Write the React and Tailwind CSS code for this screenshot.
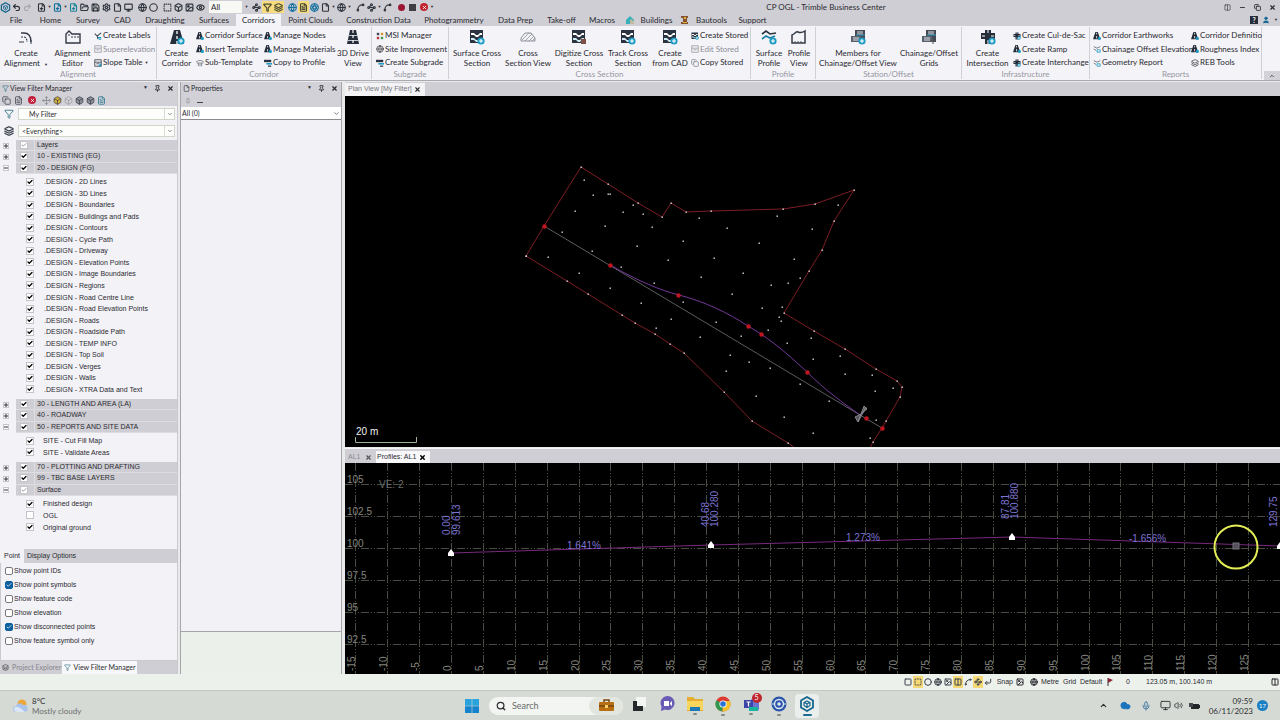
import {
  Aperture,
  Box,
  BoxSelect,
  Check,
  ChevronDown,
  ChevronUp,
  Circle,
  CircleHelp,
  Cloud,
  Columns2,
  Copy,
  CornerDownLeft,
  Eye,
  File,
  FilePlus,
  FileText,
  Filter,
  FolderOpen,
  Globe,
  Image,
  Layers,
  Mic,
  Minus,
  Monitor,
  Move,
  Pin,
  Redo2,
  Save,
  Search,
  Settings,
  Spline,
  Square,
  Undo2,
  User,
  Volume2,
  Waypoints,
  X,
} from "lucide-react";

/* ---------- ribbon icons ---------- */

function Plus({ x = 11, y = 11 }) {
  return (
    <g transform={`translate(${x} ${y})`}>
      <circle r="3.6" fill="#1c9cc4" />
      <path d="M-2 0H2M0 -2V2" stroke="#fff" strokeWidth="1.1" />
    </g>
  );
}

function RoadIcon({ plus = true, size = 16 }) {
  return (
    <svg width={size} height={size} viewBox="0 0 16 16">
      <path d="M5 1h6l4 14H1z" fill="#252c3a" />
      <path d="M8 2v3M8 7v3M8 12v3" stroke="#fff" strokeWidth="1.3" />
      {plus && <Plus x={12} y={12} />}
    </svg>
  );
}

function DriveIcon() {
  return (
    <svg width="16" height="16" viewBox="0 0 16 16">
      <path d="M5 1h6l3 14H2z" fill="#252c3a" />
      <path d="M4 6.500h8M3 11.500h10" stroke="#c3c7ce" fill="none" />
      <path d="M8 1v14" stroke="#fff" strokeWidth="1.2" strokeDasharray="3 2" />
    </svg>
  );
}

function CurveIcon() {
  return (
    <svg width="16" height="16" viewBox="0 0 16 16" fill="none" stroke="#333a46">
      <path d="M3 4h3c5 0 7 4 7 9" strokeWidth="1.3" />
      <path d="M3 8h3c2 0 3 2 3 5" strokeWidth="1.2" strokeDasharray="2 1" />
      <path d="M1 13h5M13 11v4" strokeWidth="1" />
    </svg>
  );
}

function EditorIcon() {
  return (
    <svg width="16" height="16" viewBox="0 0 16 16" fill="none" stroke="#333a46">
      <path d="M1 14V5l3-3 3 3h8v9z" strokeWidth="1.4" />
      <path d="M4 5v2M7 7v2M10 7v2M13 7v2" strokeWidth="1" />
    </svg>
  );
}

function SectionIcon({ badge = "plus", size = 16 }) {
  return (
    <svg width={size} height={size} viewBox="0 0 16 16">
      <rect x="1" y="1" width="13" height="13" fill="#2b3240" />
      <path d="M2 4h3l2 2h2l2-2h2v2h-2L9 8H7L5 6H2z" fill="#fff" />
      <path d="M2 9h3l2 2h2l2-2h2v2h-2l-2 2H7l-2-2H2z" fill="#cfeaf3" />
      {badge === "plus" && <Plus x={12} y={12} />}
      {badge === "pen" && <path d="M10 10h5v5h-5z" fill="#7d5147" />}
    </svg>
  );
}

function HatchIcon() {
  return (
    <svg width="16" height="16" viewBox="0 0 16 16" fill="none" stroke="#8b8e98">
      <path d="M1 12V9l4-5h6l4 5v3z" />
      <path d="M2 11l7-7M5 12l7-7M9 12l5-5M12 12l3-3" strokeWidth="0.8" />
    </svg>
  );
}

function SurfaceProfileIcon() {
  return (
    <svg width="16" height="16" viewBox="0 0 16 16" fill="none">
      <path d="M1 5l4-3 4 3 6-1" stroke="#2b3240" strokeWidth="1.6" />
      <path d="M1 10l4-3 4 2 5-2" stroke="#1d7fa4" strokeWidth="1.6" />
      <Plus x={12} y={12} />
    </svg>
  );
}

function ProfileIcon() {
  return (
    <svg width="16" height="16" viewBox="0 0 16 16" fill="none" stroke="#333a46">
      <path d="M1 14V6c3-1 4-4 6-3s4 1 7-1v12z" strokeWidth="1.5" />
      <path d="M4 12v2M7 12v2M10 12v2" strokeWidth="0.8" />
    </svg>
  );
}

function OffsetIcon({ plus = true }) {
  return (
    <svg width="16" height="16" viewBox="0 0 16 16">
      <path d="M5 1h10v12H5z" fill="#424955" />
      <path d="M1 7h10v6H1z" fill="#59616d" />
      <path d="M7 3h6M7 5h6M3 9h6M3 11h6" stroke="#dfe3e8" />
      <path d="M6 6h9" stroke="#2a95b8" />
      {plus ? <Plus x={12} y={12} /> : <path d="M9 12h6M12 9v6" stroke="#555" />}
    </svg>
  );
}

function IntersectionIcon({ size = 16 }) {
  return (
    <svg width={size} height={size} viewBox="0 0 16 16">
      <path d="M5 1h6v3h4v6h-4v5H5v-5H1V4h4z" fill="#252c3a" />
      <path d="M8 1v3M8 11v4M2 7h3M11 7h3" stroke="#fff" />
      <Plus x={12} y={12} />
    </svg>
  );
}

function LabelIcon() {
  return (
    <svg viewBox="0 0 10 10" fill="none">
      <path d="M1 2l3 3 5-4M4 5l1 4" stroke="#3f4753" strokeWidth="1.3" />
      <path d="M5 7h4M6 9h3" stroke="#1c9cc4" strokeWidth="1.4" />
    </svg>
  );
}

function TableIcon({ gray }) {
  return (
    <svg viewBox="0 0 10 10" fill="none">
      <rect x="1" y="1" width="8" height="8" stroke={gray ? "#9a9aa2" : "#333a46"} />
      <path d="M1 4h8M3 6h4" stroke={gray ? "#9a9aa2" : "#333a46"} />
      {!gray && <path d="M5 9l4-4v4z" fill="#1c9cc4" />}
    </svg>
  );
}

function SmallRoad() {
  return (
    <svg viewBox="0 0 10 10">
      <path d="M3 0h3l3 9H0z" fill="#252c3a" />
      <path d="M4.500 1v2M4.500 5v3" stroke="#fff" />
      <circle cx="8" cy="8" r="2" fill="#1c9cc4" />
    </svg>
  );
}

function TemplateIcon() {
  return (
    <svg viewBox="0 0 10 10" fill="none" stroke="#70757f">
      <path d="M0 4l3-2h4l3 2M1 5h8M3 5v4M7 5v4M5 6v3" />
    </svg>
  );
}

function MsiIcon() {
  return (
    <svg viewBox="0 0 10 10">
      <path d="M1 1h3v3H1z" fill="#3f4753" />
      <path d="M6 1h3v3H6z" fill="#d8962c" />
      <path d="M1 6h3v3H1z" fill="#b23737" />
      <path d="M6 6h3v3H6z" fill="#3e9a52" />
    </svg>
  );
}

function SubgradeIcon() {
  return (
    <svg viewBox="0 0 10 10">
      <path d="M0 1h9v3H0z" fill="#2b3240" />
      <path d="M3 5h7v2H3z" fill="#1c9cc4" />
      <path d="M5 8h4v2H5z" fill="#59616d" />
    </svg>
  );
}

function ReportIcon() {
  return (
    <svg viewBox="0 0 10 10" fill="none">
      <path d="M1 2l4 2 4-2M1 5l3 2" stroke="#59616d" />
      <path d="M5 6h4v3H5z" stroke="#1c9cc4" />
    </svg>
  );
}

/* ---------- ribbon ---------- */

function BigButton({ icon, lines, className, caret }) {
  return (
    <button className={`flex shrink-0 flex-col items-center ${className}`}>
      <span className="mb-[3px]">{icon}</span>
      <span className="text-[8px] leading-[10px] whitespace-nowrap">
        {lines[0]}
        <br />
        {lines[1]}
        {caret && <span className="ml-1 text-[4px]">▼</span>}
      </span>
    </button>
  );
}

function SmallColumn({ items, className }) {
  return (
    <div className={`flex h-[40px] shrink-0 flex-col justify-between ${className}`}>
      {items.map(([icon, label, gray]) => (
        <button
          key={label}
          className={`flex items-center gap-px text-[8px] leading-[13px] whitespace-nowrap [&>svg]:size-[8px] [&>svg]:shrink-0 ${gray ? "text-[#8f8f97]" : ""}`}
        >
          {icon}
          {label}
          {label === "Slope Table" && <span className="ml-px text-[4px]">▼</span>}
        </button>
      ))}
    </div>
  );
}

function RibbonGroup({ title, className, children }) {
  return (
    <section
      className={`flex shrink-0 flex-col border-r border-[#cfcfd6] pt-[2px] ${className}`}
    >
      <div className="flex h-[42px]">{children}</div>
      <h2 className="text-center text-[8px] leading-[9px] text-[#97979f]">{title}</h2>
    </section>
  );
}

function Ribbon() {
  return (
    <div className="flex h-[55px] border-b border-[#a9a9af] bg-[#f3f3f8]">
      <div className="flex min-w-0 flex-1 overflow-hidden py-px">
        <RibbonGroup title="Alignment" className="w-[157px]">
          <BigButton icon={<CurveIcon />} lines={["Create", "Alignment"]} caret className="w-[52px]" />
          <BigButton icon={<EditorIcon />} lines={["Alignment", "Editor"]} className="w-[41px]" />
          <SmallColumn
            className="ml-px"
            items={[
              [<LabelIcon />, "Create Labels"],
              [<TableIcon gray />, "Superelevation", true],
              [<TableIcon />, "Slope Table"],
            ]}
          />
        </RibbonGroup>
        <RibbonGroup title="Corridor" className="w-[215px]">
          <BigButton icon={<RoadIcon />} lines={["Create", "Corridor"]} className="w-[39px]" />
          <SmallColumn
            className="w-[68px]"
            items={[
              [<SmallRoad />, "Corridor Surface"],
              [<SmallRoad />, "Insert Template"],
              [<TemplateIcon />, "Sub-Template"],
            ]}
          />
          <SmallColumn
            className="w-[71px]"
            items={[
              [<SmallRoad />, "Manage Nodes"],
              [<SmallRoad />, "Manage Materials"],
              [<SubgradeIcon />, "Copy to Profile"],
            ]}
          />
          <BigButton icon={<DriveIcon />} lines={["3D Drive", "View"]} className="w-[36px]" />
        </RibbonGroup>
        <RibbonGroup title="Subgrade" className="w-[77px]">
          <SmallColumn
            className="ml-[4px]"
            items={[
              [<MsiIcon />, "MSI Manager"],
              [<Globe size={9} />, "Site Improvement"],
              [<SubgradeIcon />, "Create Subgrade"],
            ]}
          />
        </RibbonGroup>
        <RibbonGroup title="Cross Section" className="w-[302px]">
          <BigButton icon={<SectionIcon />} lines={["Surface Cross", "Section"]} className="w-[56px]" />
          <BigButton icon={<HatchIcon />} lines={["Cross", "Section View"]} className="w-[46px]" />
          <BigButton icon={<SectionIcon badge="pen" />} lines={["Digitize Cross", "Section"]} className="w-[56px]" />
          <BigButton icon={<SectionIcon />} lines={["Track Cross", "Section"]} className="w-[42px]" />
          <BigButton icon={<SectionIcon />} lines={["Create", "from CAD"]} className="w-[42px]" />
          <SmallColumn
            items={[
              [<SectionIcon size={9} />, "Create Stored"],
              [<TableIcon gray />, "Edit Stored", true],
              [<Copy size={9} color="#70757f" />, "Copy Stored"],
            ]}
          />
        </RibbonGroup>
        <RibbonGroup title="Profile" className="w-[65px]">
          <BigButton icon={<SurfaceProfileIcon />} lines={["Surface", "Profile"]} className="ml-[3px] w-[30px]" />
          <BigButton icon={<ProfileIcon />} lines={["Profile", "View"]} className="w-[30px]" />
        </RibbonGroup>
        <RibbonGroup title="Station/Offset" className="w-[146px]">
          <BigButton icon={<OffsetIcon />} lines={["Members for", "Chainage/Offset View"]} className="w-[84px]" />
          <BigButton icon={<OffsetIcon plus={false} />} lines={["Chainage/Offset", "Grids"]} className="w-[58px]" />
        </RibbonGroup>
        <RibbonGroup title="Infrastructure" className="w-[128px]">
          <BigButton icon={<IntersectionIcon />} lines={["Create", "Intersection"]} className="w-[51px]" />
          <SmallColumn
            items={[
              [<IntersectionIcon size={9} />, "Create Cul-de-Sac"],
              [<SmallRoad />, "Create Ramp"],
              [<IntersectionIcon size={9} />, "Create Interchange"],
            ]}
          />
        </RibbonGroup>
        <RibbonGroup title="Reports" className="w-[172px]">
          <SmallColumn
            className="ml-[3px] w-[98px]"
            items={[
              [<SmallRoad />, "Corridor Earthworks"],
              [<ReportIcon />, "Chainage Offset Elevation"],
              [<ReportIcon />, "Geometry Report"],
            ]}
          />
          <SmallColumn
            items={[
              [<SmallRoad />, "Corridor Definitio"],
              [<SmallRoad />, "Roughness Index"],
              [<Layers size={9} />, "REB Tools"],
            ]}
          />
        </RibbonGroup>
      </div>
      <div className="flex w-[16px] flex-col justify-end">
        <button aria-label="Collapse ribbon" className="flex h-[9px] items-center justify-center bg-[#d2d1d7]">
          <ChevronUp size={6} strokeWidth={3} />
        </button>
      </div>
    </div>
  );
}

const menuTabs = [
  ["File", "w-[32px]"],
  ["Home", "w-[37px]"],
  ["Survey", "w-[38px]"],
  ["CAD", "w-[31px]"],
  ["Draughting", "w-[54px]"],
  ["Surfaces", "w-[44px]"],
  ["Corridors", "w-[45px]"],
  ["Point Clouds", "w-[59px]"],
  ["Construction Data", "w-[77px]"],
  ["Photogrammetry", "w-[74px]"],
  ["Data Prep", "w-[49px]"],
  ["Take-off", "w-[43px]"],
  ["Macros", "w-[38px]"],
  ["Buildings", "w-[56px]"],
  ["Bautools", "w-[54px]"],
  ["Support", "w-[43px]"],
];

function MenuTabs() {
  return (
    <nav className="flex h-[12px] items-stretch text-[8px] leading-[12px]">
      {menuTabs.map(([label, width]) => (
        <button
          key={label}
          className={`flex shrink-0 items-center justify-center whitespace-nowrap ${width} ${label === "Corridors" ? "bg-[#f3f3f8]" : ""}`}
        >
          {label === "Buildings" && (
            <svg width="8" height="8" viewBox="0 0 8 8" className="mr-[7px]">
              <path d="M0 4l4-4 4 4v4H0z" fill="#35b0b8" />
              <path d="M4 3l4 2v3H4z" fill="#c2b8a4" />
            </svg>
          )}
          {label === "Bautools" && (
            <svg width="8" height="8" viewBox="0 0 8 8" className="mr-[7px]">
              <path d="M0 0h7v2H6v4h1v2H0V6h2V2H0z" fill="#85522f" />
              <path d="M3 1h2v2H3zM2 6h4v1H2z" fill="#e2b23c" />
            </svg>
          )}
          {label}
        </button>
      ))}
      <div className="ml-auto flex items-center gap-1 pr-[2px]">
        <span className="flex size-[8px] items-center justify-center bg-[#252c3a] text-[7px] font-bold text-white">
          ?
        </span>
        <User size={8} fill="#1a6896" color="#1a6896" />
        <span className="text-[4px]">▼</span>
      </div>
    </nav>
  );
}

/* ---------- title bar ---------- */

function TrimbleLogo({ size = 11 }) {
  return (
    <svg width={size} height={size} viewBox="0 0 16 16" fill="none" stroke="#17678f">
      <path d="M8 1l6 3.500v7L8 15l-6-3.500v-7z" strokeWidth="1.8" />
      <path d="M8 5l3 1.500v3L8 11.500l-3-2v-3zM8 8v3M8 8l3-2M8 8L5 6" strokeWidth="1.2" />
    </svg>
  );
}

const quickTools = [
  [TrimbleLogo], [Undo2], [Redo2, "faded"], "gap", [FilePlus], "caret",
  [FilePlus, "blue"], "caret", [FilePlus, "teal"], [FolderOpen], [Save],
  [Settings], [File], [Monitor], "gap", [Globe], [Circle], "gap",
  [BoxSelect], [Box], [Image], [Eye], "gap",
];

const viewTools = [
  [Waypoints], [Filter, "active"], [Layers, "active"], "gap", [Globe, "blue"],
  [FileText, "active"], [Aperture, "blue"], [File], "caret", [Globe], "caret",
  "gap", [Spline], [Waypoints], "caret", [Spline], "gap",
];

const toolTones = {
  faded: "text-[#a8a8ae]",
  blue: "text-[#126f9e]",
  teal: "text-[#20859a]",
  active: "bg-[#f6dc7d] text-[#4b4a35]",
};

function ToolStrip({ tools }) {
  return tools.map((tool, i) => {
    if (tool === "gap") return <span key={i} className="w-[3px] shrink-0" />;
    if (tool === "caret")
      return (
        <span key={i} className="w-[5px] shrink-0 text-center text-[4px]">
          ▼
        </span>
      );
    const [Icon, tone] = tool;
    return (
      <button
        key={i}
        className={`flex h-[12px] w-[11px] shrink-0 items-center justify-center ${toolTones[tone] ?? "text-[#30343e]"}`}
      >
        <Icon size={Icon === TrimbleLogo ? 11 : 9} strokeWidth={3} />
      </button>
    );
  });
}

function TitleBar() {
  return (
    <header className="flex h-[14px] items-center">
      <ToolStrip tools={quickTools} />
      <input
        aria-label="Selection"
        defaultValue="All"
        className="h-[12px] w-[33px] shrink-0 bg-[#f8f8f4] px-[2px] text-[8px] outline-none"
      />
      <span className="w-[9px] shrink-0 text-center text-[4px]">▼</span>
      <ToolStrip tools={viewTools} />
      <span className="mx-[2px] size-[7px] rounded-full bg-[#9c1733]" />
      <span className="mx-[2px] size-[7px] bg-[#3d3f45]" />
      <span className="mx-[2px] flex size-[8px] items-center justify-center rounded-full bg-[#c3252f] text-white">
        <X size={5} strokeWidth={4} />
      </span>
      <span className="text-[4px]">▼</span>
      <h1 className="flex-1 text-center text-[8px] leading-[12px]">
        CP OGL - Trimble Business Center
      </h1>
      <div className="flex w-[62px] items-center justify-end gap-[8px] pr-1">
        <button aria-label="Ribbon display options"><Columns2 size={7} /></button>
        <button aria-label="Minimize"><Minus size={7} strokeWidth={3} /></button>
        <button aria-label="Restore"><Copy size={7} strokeWidth={3} /></button>
        <button aria-label="Close"><X size={7} strokeWidth={4} /></button>
      </div>
    </header>
  );
}

/* ---------- side panels ---------- */

function PanelTitle({ icon, title }) {
  return (
    <div className="flex h-[12px] items-center gap-px bg-[#d2d1d7] px-[2px] text-[7px]">
      {icon}
      <h2 className="flex-1 whitespace-nowrap">{title}</h2>
      <div className="flex items-center gap-[6px] pr-px">
        <span className="text-[5px]">▼</span>
        <Pin size={7} strokeWidth={3} />
        <X size={7} strokeWidth={4} />
      </div>
    </div>
  );
}

function TreeCheck({ label, checked = true, soft }) {
  return (
    <span className="grid size-[8px] shrink-0 place-items-center">
      <input
        type="checkbox"
        aria-label={label}
        defaultChecked={checked}
        className="peer col-start-1 row-start-1 size-[8px] appearance-none border border-[#c3c3c8] bg-white"
      />
      <Check
        size={6}
        strokeWidth={soft ? 3 : 5}
        className={`pointer-events-none invisible col-start-1 row-start-1 peer-checked:visible ${soft ? "text-[#77777c]" : "text-black"}`}
      />
    </span>
  );
}

const tree = [
  { name: "Layers", soft: true },
  { name: "10 - EXISTING (EG)" },
  {
    name: "20 - DESIGN (FG)",
    height: "h-[219px]",
    indent: "pl-[10px]",
    children: [
      ".DESIGN - 2D Lines",
      ".DESIGN - 3D Lines",
      ".DESIGN - Boundaries",
      ".DESIGN - Buildings and Pads",
      ".DESIGN - Contours",
      ".DESIGN - Cycle Path",
      ".DESIGN - Driveway",
      ".DESIGN - Elevation Points",
      ".DESIGN - Image Boundaries",
      ".DESIGN - Regions",
      ".DESIGN - Road Centre Line",
      ".DESIGN - Road Elevation Points",
      ".DESIGN - Roads",
      ".DESIGN - Roadside Path",
      ".DESIGN - TEMP INFO",
      ".DESIGN - Top Soil",
      ".DESIGN - Verges",
      ".DESIGN - Walls",
      ".DESIGN - XTRA Data and Text",
    ],
  },
  { name: "30 - LENGTH AND AREA (LA)" },
  { name: "40 - ROADWAY" },
  {
    name: "50 - REPORTS AND SITE DATA",
    height: "h-[23px]",
    indent: "pl-[9px]",
    children: ["SITE - Cut Fill Map", "SITE - Validate Areas"],
  },
  { name: "70 - PLOTTING AND DRAFTING" },
  { name: "99 - TBC BASE LAYERS" },
  {
    name: "Surface",
    soft: true,
    height: "h-[35px]",
    indent: "pl-[9px]",
    children: ["Finished design", "OGL", "Original ground"],
  },
];

// three group rows share one block so that they keep an even pitch
const treeBlocks = [tree.slice(0, 3), tree.slice(3, 6), tree.slice(6, 9)];

function LayerTree() {
  return treeBlocks.map((groups) => {
    const open = groups[2];
    return (
      <div key={open.name}>
        <div className="grid h-[34px] auto-rows-fr">
          {groups.map((group) => (
            <div key={group.name} className="flex items-center">
              <button
                aria-label={`Toggle ${group.name}`}
                className="mr-[7px] ml-[3px] flex size-[6px] items-center justify-center border border-[#c5c5ca] bg-white"
              >
                <svg width="4" height="4" viewBox="0 0 4 4" stroke="#333">
                  <path d={group.children ? "M0 2h4" : "M0 2h4M2 0v4"} />
                </svg>
              </button>
              <div className="flex h-full flex-1 items-center border-b border-[#dddde2] bg-[#cfced4] pl-[4px] text-[7px] leading-[10px]">
                <TreeCheck label={group.name} soft={group.soft} />
                <span className="ml-[6px] h-full border-l border-[#dddde2] pl-[2px]">
                  {group.name}
                </span>
              </div>
            </div>
          ))}
        </div>
        <ul className={`mt-[2px] mb-[4px] grid auto-rows-fr pl-[26px] text-[7px] leading-[11px] ${open.height}`}>
          {open.children.map((name) => (
            <li key={name} className="flex items-center">
              <TreeCheck label={name} checked={name !== "OGL"} />
              <span className={`whitespace-nowrap ${open.indent}`}>{name}</span>
            </li>
          ))}
        </ul>
      </div>
    );
  });
}

const displayOptions = [
  ["Show point IDs", false],
  ["Show point symbols", true],
  ["Show feature code", false],
  ["Show elevation", false],
  ["Show disconnected points", true],
  ["Show feature symbol only", false],
];

function FilterSelect({ label, value, className }) {
  return (
    <div className="grid flex-1 items-center border border-[#cfd8c8] bg-[#fdfdfb]">
      <select
        aria-label={label}
        className={`col-start-1 row-start-1 h-[10px] appearance-none text-[7px] leading-[10px] outline-none ${className}`}
      >
        <option>{value}</option>
      </select>
      <span className="pointer-events-none col-start-1 row-start-1 flex h-[10px] w-[10px] items-center justify-center justify-self-end border-l border-[#d5ddd0]">
        <ChevronDown size={6} />
      </span>
    </div>
  );
}

function FilterPanel() {
  return (
    <aside className="flex w-[178px] shrink-0 flex-col border-r border-[#c9c9ce] bg-[#f3f2f7]">
      <PanelTitle icon={<Filter size={7} color="#24687e" />} title="View Filter Manager" />
      <div className="flex h-[12px] items-center gap-[2px] bg-[#d2d1d7] pl-[2px] text-[#3b3f49]">
        <Copy size={9} />
        <FileText size={9} className="mx-px" />
        <span className="mx-[2px] flex size-[8px] items-center justify-center rounded-full bg-[#c0203c] text-white">
          <X size={5} strokeWidth={4} />
        </span>
        <Move size={9} className="ml-[2px] text-[#80848c]" />
        <Box size={9} fill="#d4b13b" />
        <Box size={9} color="#9b9ba1" />
        <Box size={9} fill="#8c9098" />
        <Box size={9} fill="#8c9098" />
        <FileText size={9} color="#1d718c" />
      </div>
      <div className="flex h-[16px] items-center gap-1 pr-[2px] pl-[4px]">
        <Filter size={10} color="#2e6c7c" />
        <FilterSelect label="View filter" value="My Filter" className="pl-[10px]" />
      </div>
      <div className="mb-px flex h-[17px] items-center gap-1 pt-px pr-[2px] pl-[4px]">
        <Layers size={10} strokeWidth={3} color="#3c4450" />
        <FilterSelect label="Selection set" value="<Everything>" className="pl-[3px]" />
      </div>
      <div className="flex-1 font-['Liberation_Sans',sans-serif]">
        <LayerTree />
      </div>
      <div className="flex h-[14px] bg-[#cfced4] text-[7px] font-['Liberation_Sans',sans-serif]">
        <button className="w-[24px] bg-[#f3f2f7]">Point</button>
        <button className="px-[3px]">Display Options</button>
      </div>
      <div className="grid h-[97px] content-start border-l border-[#c9c9ce] pt-[1px] pl-[4px] font-['Liberation_Sans',sans-serif]">
        {displayOptions.map(([label, checked]) => (
          <label key={label} className="flex h-[14px] items-center gap-px text-[7px]">
            <span className="grid size-[8px] place-items-center">
              <input
                type="checkbox"
                defaultChecked={checked}
                className="peer col-start-1 row-start-1 size-[8px] appearance-none rounded-[2px] border border-[#77777c] bg-white checked:border-[#0d5f9f] checked:bg-[#0d5f9f]"
              />
              <Check
                size={6}
                strokeWidth={3}
                className="pointer-events-none invisible col-start-1 row-start-1 text-white peer-checked:visible"
              />
            </span>
            {label}
          </label>
        ))}
      </div>
      <div className="flex h-[14px] border-t border-[#c9c9ce] bg-[#cfced4] text-[7px] whitespace-nowrap">
        <button className="flex w-[62px] items-center gap-[3px] pl-[2px] text-[#85858c]">
          <Layers size={7} color="#333" />
          Project Explorer
        </button>
        <button className="flex w-[75px] items-center justify-center gap-[3px] bg-[#f8f8fa]">
          <Filter size={7} color="#24687e" />
          View Filter Manager
        </button>
      </div>
    </aside>
  );
}

function PropertiesPanel() {
  return (
    <aside className="ml-[2px] flex w-[162px] shrink-0 flex-col border-x border-[#a5a5ab] bg-[#ecf0eb]">
      <PanelTitle icon={<File size={7} />} title="Properties" />
      <div className="flex h-[13px] items-center gap-[6px] bg-[#d2d1d7] pl-1">
        <Pin size={6} color="#88888e" />
        <span className="mt-[3px] h-px w-[6px] bg-[#44444a]" />
      </div>
      <div className="grid h-[13px] items-center border-b border-[#8a8a90] bg-white">
        <select
          aria-label="Selected objects"
          className="col-start-1 row-start-1 h-[12px] appearance-none pl-px text-[7px] outline-none"
        >
          <option>All (0)</option>
        </select>
        <ChevronDown size={7} className="pointer-events-none col-start-1 row-start-1 mr-px justify-self-end" />
      </div>
      <div className="mb-[42px] flex-1 border-b border-[#a5a5ab] bg-[#f1f1f6]" />
    </aside>
  );
}

/* ---------- plan view ---------- */

const boundaryTop = [
  [526, 256], [544, 226], [581, 167], [608, 184], [638, 203], [662, 217], [671, 203],
  [686, 212], [711, 211], [783, 209], [815, 204], [854, 190], [834, 221],
  [822, 250], [809, 271], [784, 313], [814, 331], [845, 349], [876, 369],
  [897, 381], [902, 387], [900, 397], [886, 421], [882, 428], [873, 442], [870, 448],
];

const boundaryBottom = [
  [526, 256], [567, 281], [588, 294], [622, 315], [635, 323], [655, 334],
  [670, 344], [684, 353], [724, 392], [752, 421], [788, 443], [795, 448],
];

const spotLevels = [
  [584, 180], [593, 195], [608, 194], [610, 194], [575, 211], [633, 205],
  [623, 212], [643, 214], [605, 226], [562, 232], [592, 251], [637, 246],
  [548, 257], [579, 273], [621, 267], [610, 288], [641, 303], [652, 227],
  [699, 218], [683, 241], [727, 228], [759, 243], [777, 216], [812, 229],
  [838, 205], [668, 260], [714, 258], [701, 277], [743, 273], [794, 259],
  [800, 278], [788, 283], [771, 285], [732, 294], [654, 283], [683, 302],
  [671, 319], [656, 328], [716, 322], [762, 308], [782, 307], [779, 317],
  [781, 321], [768, 330], [741, 336], [700, 337], [787, 343], [811, 338],
  [840, 356], [813, 359], [730, 355], [749, 362], [770, 368], [726, 371],
  [845, 374], [872, 375], [875, 391], [893, 388], [800, 384], [756, 396],
  [829, 401], [784, 417], [813, 433], [876, 420], [870, 438],
];

const alignmentNodes = [
  [544, 226], [610, 265], [678, 295], [748, 326],
  [761, 334], [807, 372], [866, 418], [882, 428],
];

function PlanView() {
  return (
    <svg className="block h-full w-full bg-black" role="img" aria-label="Plan view">
      <g transform="translate(-345 -96)" fill="none">
        <polyline points={boundaryTop.join(" ")} stroke="#7c1d25" />
        <polyline points={boundaryBottom.join(" ")} stroke="#7c1d25" />
        <path d="M544 226L860 415L882 428" stroke="#5c5c5c" />
        <path
          d="M610 265C640 282 660 290 679 295C706 302 728 313 748 326L761 334C780 347 793 359 807 372C825 390 843 403 860 415"
          stroke="#74389a"
        />
        {[...boundaryTop, ...boundaryBottom, ...spotLevels].map(([x, y], i) => (
          <rect key={i} x={x - 0.5} y={y - 0.5} width="1.400" height="1.400" fill="#dcdcdc" />
        ))}
        {alignmentNodes.map(([x, y]) => (
          <circle key={x} cx={x + 0.5} cy={y + 0.5} r="2.200" fill="#c3151f" />
        ))}
        <path
          d="M861 414L864 406L867 409ZM861 414L855 417L858 422ZM858 422L866 407"
          fill="#55555c"
          stroke="#9a9aa2"
          strokeWidth="0.8"
        />
        <path d="M355.500 437V442.500H416.500V437" stroke="#9fb29a" />
        <text x="356" y="435" fill="#f0f0f0" fontSize="10">
          20 m
        </text>
      </g>
    </svg>
  );
}

/* ---------- profile view ---------- */

const chainages = Array.from({ length: 29 }, (_, i) => -15 + i * 5);
const levels = [105, 102.5, 100, 97.5, 95, 92.5];

const slopes = [
  ["1.641%", 567, 549],
  ["1.273%", 846, 541],
  ["-1.656%", 1129, 542],
];

const stations = [
  ["0.00", 450, 535],
  ["99.613", 460, 535],
  ["40.68", 709, 527],
  ["100.280", 718, 527],
  ["87.81", 1009, 519],
  ["100.880", 1018, 519],
  ["129.75", 1277, 527],
];

const intersections = [[451, 553], [711, 545], [1012, 537], [1280, 546]];

function ProfileView() {
  const xOf = (chainage) => Math.round(451 + chainage * 6.376) + 0.5;
  const yOf = (level) => 548.5 + (100 - level) * 12.8;

  return (
    <svg className="block h-full w-full bg-black" role="img" aria-label="Profile of AL1">
      <g transform="translate(-345 -463)" fontSize="10">
        <g stroke="#484d44" strokeDasharray="8 2 1 2 1 2">
          {chainages.map((c) => (
            <line key={c} x1={xOf(c)} x2={xOf(c)} y1="463" y2="674" />
          ))}
          {levels.map((l) => (
            <line key={l} x1="345" x2="2600" y1={yOf(l)} y2={yOf(l)} />
          ))}
        </g>
        <g fill="#85857f">
          {levels.map((l) => (
            <text key={l} x="347" y={yOf(l) - 2}>
              {l}
            </text>
          ))}
          <text x="379" y="488" fill="#6b6b68">
            VE: 2
          </text>
          {chainages.map((c) => (
            <text key={c} transform={`translate(${xOf(c) - 1} 671) rotate(-90)`}>
              {c}
            </text>
          ))}
        </g>
        <polyline points={intersections.join(" ")} fill="none" stroke="#772a7d" />
        <g fill="#7d74d2">
          {slopes.map(([label, x, y]) => (
            <text key={label} x={x} y={y}>
              {label}
            </text>
          ))}
          {stations.map(([label, x, y]) => (
            <text key={label} transform={`translate(${x} ${y}) rotate(-90)`}>
              {label}
            </text>
          ))}
        </g>
        {intersections.map(([x, y]) => (
          <path key={x} d={`M${x} ${y - 4}l3 4v3h-6v-3z`} fill="#fff" />
        ))}
        <rect x="1233" y="543" width="6" height="6" fill="#55505a" stroke="#77727c" />
        <circle cx="1236" cy="547" r="21.500" fill="none" stroke="#e3ee55" strokeWidth="2" />
      </g>
    </svg>
  );
}

function Views() {
  return (
    <main className="ml-[3px] flex min-w-0 flex-1 flex-col font-['Liberation_Sans',sans-serif] text-[7px]">
      <div className="flex h-[14px] bg-[#cfced4] pt-px">
        <button className="flex w-[80px] items-center justify-between bg-[#f3f3f6] pr-[4px] pl-[3px] whitespace-nowrap text-[#77777d]">
          Plan View [My Filter] <X size={7} strokeWidth={4} color="#333" />
        </button>
      </div>
      <div className="min-h-0 flex-1">
        <PlanView />
      </div>
      <div className="mt-px flex h-[15px] border-t border-[#f5f5f7] bg-[#cfced4] pt-[2px]">
        <button className="flex w-[31px] items-center justify-between pr-[4px] pl-[3px] text-[#8b8b91]">
          AL1 <X size={7} strokeWidth={4} color="#555" />
        </button>
        <button className="flex w-[54px] items-center justify-between bg-[#f8f8fb] pr-[4px] pl-px whitespace-nowrap">
          Profiles: AL1 <X size={7} strokeWidth={5} color="#000" />
        </button>
      </div>
      <div className="h-[211px]">
        <ProfileView />
      </div>
    </main>
  );
}

/* ---------- status bar and taskbar ---------- */

const snapTools = [
  [Square], [BoxSelect, true], [Circle], [Globe], [Image],
  [Columns2, true], [Spline], [Waypoints, true], [CornerDownLeft],
];

function StatusBar() {
  return (
    <footer className="flex h-[16px] items-center justify-end bg-[#edf1ec] font-['Liberation_Sans',sans-serif] text-[7px]">
      {snapTools.map(([Icon, on], i) => (
        <button
          key={i}
          className={`flex h-[12px] w-[10px] items-center justify-center text-[#3b414b] ${on ? "bg-[#f4d976]" : ""}`}
        >
          <Icon size={8} strokeWidth={3} />
        </button>
      ))}
      <span className="w-[20px] text-right">Snap</span>
      <span className="flex w-[28px] items-center justify-around">
        <Image size={8} strokeWidth={3} />
        <Globe size={8} strokeWidth={3} />
      </span>
      <span className="w-[22px]">Metre</span>
      <span className="w-[17px]">Grid</span>
      <span className="w-[27px]">Default</span>
      <svg width="6" height="8" viewBox="0 0 6 8" className="mr-[13px]">
        <path d="M1 0v8" stroke="#333" />
        <path d="M1 0l5 2-5 3z" fill="#8c2435" />
      </svg>
      <span className="w-[20px]">0</span>
      <span className="w-[125px]">123.05 m, 100.140 m</span>
      <Columns2 size={8} strokeWidth={3} className="mr-px" />
    </footer>
  );
}

function ChromeLogo() {
  return (
    <svg width="16" height="16" viewBox="0 0 16 16">
      <circle cx="8" cy="8" r="7.500" fill="#dd3b30" />
      <path d="M8 8L1.500 4.200A7.500 7.500 0 0 0 7.500 15.500z" fill="#2f9a4b" />
      <path d="M8 8l-.5 7.500A7.500 7.500 0 0 0 15 5H8z" fill="#f3c32f" />
      <circle cx="8" cy="8" r="3.600" fill="#fff" />
      <circle cx="8" cy="8" r="2.800" fill="#2b72d8" />
    </svg>
  );
}

function TaskIcon({ label, running, active, children }) {
  return (
    <button
      aria-label={label}
      className={`flex h-[24px] w-[24px] flex-col items-center justify-center rounded-sm ${active ? "bg-[#eaeeec]" : ""}`}
    >
      {children}
      <span
        className={`mt-[2px] h-[2px] rounded-full ${active ? "w-[9px] bg-[#1d6c94]" : running ? "w-[4px] bg-[#85898a]" : "w-[4px]"}`}
      />
    </button>
  );
}

function Taskbar() {
  return (
    <footer className="grid h-[30px] grid-cols-[1fr_auto_1fr] items-center border-t border-[#c3c8c2] bg-[#d6dad5] text-[8px] text-[#2d2f31]">
      <div className="flex items-center gap-1 pl-[12px]">
        <svg width="16" height="16" viewBox="0 0 16 16">
          <circle cx="10" cy="6" r="4.500" fill="#eda63a" />
          <path d="M4 14a3 3 0 0 1 0-6 4 4 0 0 1 7-1 3.500 3.500 0 0 1 2 7z" fill="#a9c3ea" />
          <path d="M4 14a3 3 0 0 1-1-5c3-1 6 1 10 5z" fill="#dbe6f6" />
        </svg>
        <div className="leading-[10px]">
          <p>8°C</p>
          <p className="text-[#6a6e6c]">Mostly cloudy</p>
        </div>
      </div>
      <div className="flex items-center gap-1 pl-[4px]">
        <button aria-label="Start" className="mr-[6px]">
          <svg width="14" height="14" viewBox="0 0 14 14">
            <path d="M0 0h6.700v6.700H0zM7.300 0H14v6.700H7.300z" fill="#29a3dc" />
            <path d="M0 7.300h6.700V14H0zM7.300 7.300H14V14H7.300z" fill="#1583cd" />
          </svg>
        </button>
        <label className="flex h-[18px] w-[134px] items-center rounded-full bg-[#f2f5f1] pl-[7px]">
          <Search size={10} strokeWidth={3} className="shrink-0" />
          <input
            aria-label="Search"
            placeholder="Search"
            className="ml-[6px] w-full min-w-0 text-[9px] outline-none placeholder:text-[#66696a]"
          />
          <span className="flex h-[18px] w-[34px] shrink-0 items-center justify-center rounded-full bg-[#e3e6df]">
            <svg width="15" height="13" viewBox="0 0 15 13">
              <path d="M5 3V1h5v2" fill="none" stroke="#744410" strokeWidth="1.500" />
              <rect y="3" width="15" height="9" rx="1" fill="#b86f13" />
              <path d="M0 7h15" stroke="#744410" strokeWidth="1.500" />
              <path d="M6 6h3v3H6z" fill="#f7d36a" />
            </svg>
          </span>
        </label>
        <TaskIcon label="Task view">
          <svg width="14" height="14" viewBox="0 0 14 14">
            <path d="M4 0h10v10H4z" fill="#f3f5f3" />
            <path d="M1 4h4v5h6v5H1z" fill="#26292b" />
          </svg>
        </TaskIcon>
        <TaskIcon label="Chat">
          <svg width="15" height="15" viewBox="0 0 15 15">
            <path d="M8 0a7 7 0 1 1-3 13.500L1 15l.5-4.500A7 7 0 0 1 8 0z" fill="#6a5cb4" />
            <path d="M4 5h5v5H4zM10 7l2-2v5l-2-2z" fill="#fff" />
          </svg>
        </TaskIcon>
        <TaskIcon label="File Explorer" running>
          <svg width="16" height="14" viewBox="0 0 16 14">
            <path d="M0 0h6l2 2h8v12H0z" fill="#e5ae31" />
            <path d="M0 4h16v9H0z" fill="#f8d55c" />
            <path d="M3 10h10v4H3z" fill="#1c79b5" />
          </svg>
        </TaskIcon>
        <TaskIcon label="Chrome" running>
          <ChromeLogo />
        </TaskIcon>
        <TaskIcon label="Teams" running>
          <span className="relative">
            <svg width="15" height="14" viewBox="0 0 15 14">
              <circle cx="10" cy="4" r="3" fill="#6c74d0" />
              <path d="M5 5h10v5a4 4 0 0 1-8 2z" fill="#6c74d0" />
              <path d="M0 3h9v8H0z" fill="#3b46a8" />
              <path d="M2.500 5h4M4.500 5v4.500" stroke="#fff" strokeWidth="1.200" />
              <path d="M5 10h9v4H5z" fill="#18b49b" />
            </svg>
            <span className="absolute -top-[4px] -right-[3px] flex size-[10px] items-center justify-center rounded-full bg-[#c0262d] text-[7px] text-white">
              5
            </span>
          </span>
        </TaskIcon>
        <TaskIcon label="Trimble Connect" running>
          <svg width="16" height="16" viewBox="0 0 16 16">
            <circle cx="8" cy="8" r="7.500" fill="#2a55a8" />
            <circle cx="8" cy="8" r="4.500" fill="none" stroke="#dfe8f6" strokeWidth="1.400" />
            <circle cx="8" cy="8" r="1.800" fill="#dfe8f6" />
            <path d="M1 8h3M12 8h3" stroke="#dfe8f6" />
          </svg>
        </TaskIcon>
        <TaskIcon label="Trimble Business Center" active>
          <TrimbleLogo size={16} />
        </TaskIcon>
      </div>
      <div className="flex items-center justify-end pr-[12px]">
        <ChevronUp size={9} strokeWidth={3} className="mr-[12px]" />
        <Cloud size={11} fill="#1c74bd" color="#1c74bd" className="mr-[10px]" />
        <Mic size={10} color="#32709c" className="mr-[9px]" />
        <Monitor size={11} className="mr-[3px]" />
        <Volume2 size={9} className="mr-[6px]" />
        <svg width="11" height="8" viewBox="0 0 11 8" className="mr-[9px]">
          <path d="M2 2h8v5H2z" fill="#232628" />
          <path d="M0 1h4v4H0z" fill="#44484a" />
          <path d="M10 3h1v3h-1z" fill="#232628" />
        </svg>
        <div className="mr-[4px] text-right leading-[10px]">
          <p>09:59</p>
          <p>06/11/2023</p>
        </div>
        <span className="flex size-[11px] items-center justify-center rounded-full bg-[#1b7fc4] text-[6px] text-white">
          17
        </span>
      </div>
    </footer>
  );
}

export default function App() {
  return (
    <div className="flex h-screen flex-col overflow-hidden bg-[#e9ebea] font-[Lato,'Open_Sans',sans-serif] text-[#2a2a30]">
      <div className="bg-[#cfced4]">
        <TitleBar />
        <MenuTabs />
      </div>
      <Ribbon />
      <div className="mt-px flex min-h-0 flex-1">
        <FilterPanel />
        <PropertiesPanel />
        <Views />
      </div>
      <StatusBar />
      <Taskbar />
    </div>
  );
}
